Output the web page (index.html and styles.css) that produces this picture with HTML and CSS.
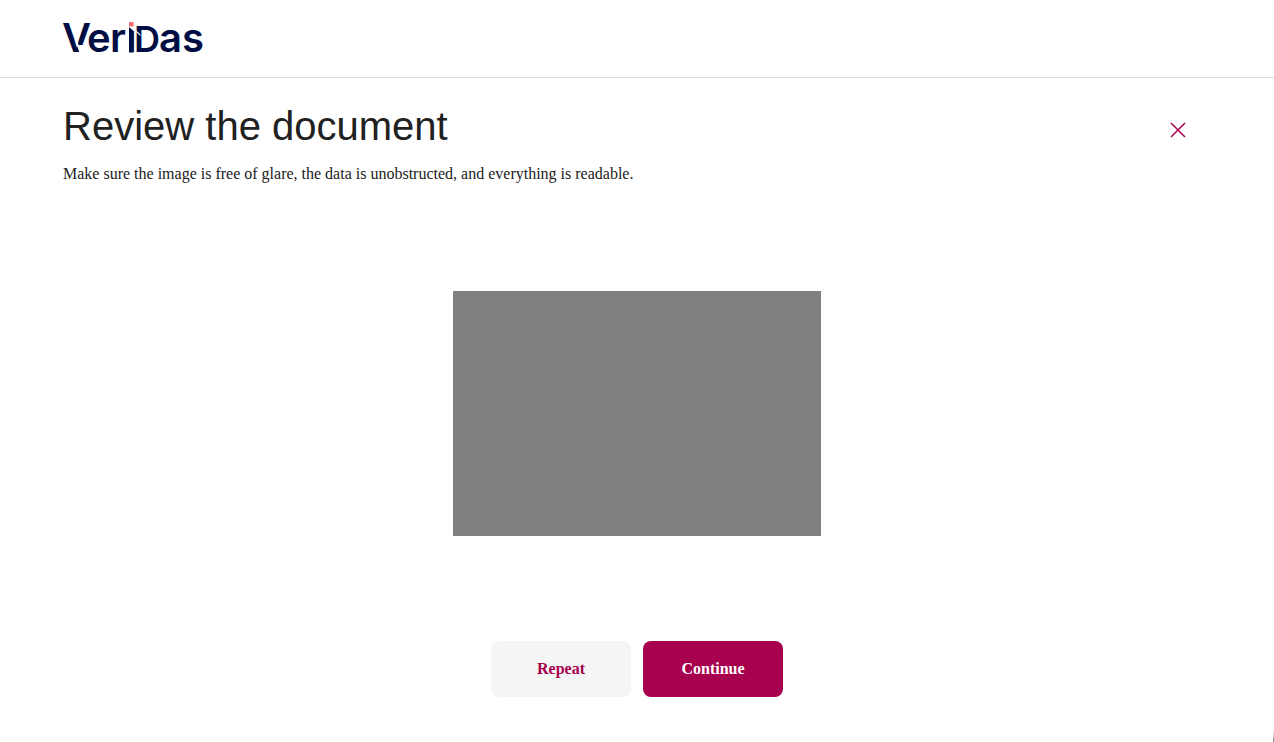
FILE: index.html
```html
<!DOCTYPE html>
<html lang="en">
<head>
    <meta charset="utf-8">
    <meta name="viewport" content="width=device-width, initial-scale=1">
    <title>Review the document</title>
    <link rel="stylesheet" href="styles.css">
</head>
<body>
    <header class="header">
        <svg class="logo" viewBox="0 0 141 32" role="img" aria-label="VeriDas">
            <text class="logo-text" y="30" x="-1 24 47 63 71 96 119">Veri<tspan class="logo-d">D</tspan>as</text>
            <!-- cut between the two strokes of the V -->
            <path class="logo-cut" d="M12 18 L14 18 L15.5 23 L23 23 L23 32 L17 32 Z"/>
            <!-- stem and dot of the i -->
            <rect class="logo-cut" x="65" y="-2" width="7" height="11"/>
            <rect class="logo-cut" x="64" y="-2" width="2" height="34"/>
            <path class="logo-stem" d="M66 5 L70.5 9 L70.5 30.5 L66 30.5 Z"/>
            <rect class="logo-dot" x="66" y="0" width="4.5" height="4.5"/>
            <!-- notch in the D -->
            <path class="logo-cut" d="M72 7.5 L77.5 12.5 L77.5 14 L72 9 Z"/>
        </svg>
    </header>
    <main class="review">
        <div class="top">
            <div class="intro">
                <h1 class="title">Review the document</h1>
                <p class="text">Make sure the image is free of glare, the data is unobstructed, and everything is readable.</p>
            </div>
            <button class="close" type="button" aria-label="Close">
                <svg class="close-icon" viewBox="0 0 16 16" aria-hidden="true">
                    <path d="M1 1 L15 15 M15 1 L1 15"/>
                </svg>
            </button>
        </div>
        <div class="preview">
            <div class="document" role="img" aria-label="Document"></div>
        </div>
        <div class="actions">
            <button class="btn btn-secondary" type="button">Repeat</button>
            <button class="btn btn-primary" type="button">Continue</button>
        </div>
    </main>
    <div class="corner"></div>
</body>
</html>
```

FILE: styles.css
```css
* {
    box-sizing: border-box;
}
body {
    margin: 0;
    min-height: 100vh;
    display: flex;
    flex-direction: column;
    background-color: #fff;
    color: #212121;
    font-family: "Liberation Serif", "Times New Roman", serif;
    font-size: 16px;
}
.header {
    padding: 22px 63px 23px;
    border-bottom: 1px solid #dcdcdc;
}
.logo {
    display: block;
    width: 141px;
    height: 32px;
    overflow: visible;
}
.logo-text {
    font-family: Inter, "Liberation Sans", sans-serif;
    font-size: 40px;
    font-weight: 600;
    fill: #000e44;
}
.logo-d {
    font-size: 36px;
}
.logo-cut {
    fill: #fff;
}
.logo-stem {
    fill: #000e44;
}
.logo-dot {
    fill: #f56b73;
}
.review {
    flex: 1;
    display: flex;
    flex-direction: column;
    padding: 24px 63px 45px;
}
.top {
    display: flex;
    justify-content: space-between;
    align-items: flex-start;
}
.title {
    margin: 0 0 12px;
    font-family: "Liberation Sans", Arial, sans-serif;
    font-size: 40px;
    font-weight: 400;
    line-height: 48px;
}
.text {
    margin: 0;
    line-height: 24px;
}
.close {
    display: flex;
    margin: 4px 9px 0 0;
    padding: 16px;
    border: 0;
    background: none;
    cursor: pointer;
}
.close-icon {
    width: 16px;
    height: 16px;
    fill: none;
    stroke: #a6004f;
    stroke-width: 1.5;
}
.preview {
    flex: 1;
    display: flex;
    justify-content: center;
    align-items: center;
}
.document {
    width: 32%;
    aspect-ratio: 3 / 2;
    background-color: #808080;
}
.actions {
    display: flex;
    justify-content: center;
    gap: 12px;
}
.btn {
    width: 140px;
    height: 56px;
    border: 0;
    border-radius: 8px;
    font-family: inherit;
    font-size: 16px;
    font-weight: 700;
    cursor: pointer;
}
.btn-secondary {
    background-color: #f4f6f6;
    color: #a6004f;
}
.btn-primary {
    background-color: #a6004f;
    color: #fff;
}
.corner {
    position: fixed;
    right: 0;
    bottom: 0;
    width: 1px;
    height: 11px;
    background: linear-gradient(#fff, #808080);
}
```
